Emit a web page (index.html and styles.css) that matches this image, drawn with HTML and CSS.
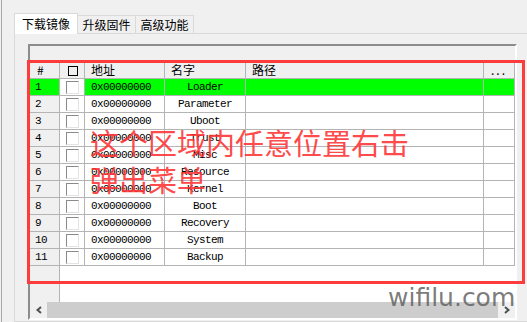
FILE: index.html
```html
<!DOCTYPE html>
<html lang="zh-CN">
<head>
  <meta charset="UTF-8">
  <title>下载镜像</title>
  <link rel="stylesheet" href="styles.css">
</head>
<body>

  <div class="window">
    <div class="tabs">
      <div class="tab active">下载镜像</div>
      <div class="tab">升级固件</div>
      <div class="tab">高级功能</div>
    </div>

    <div class="panel">
      <div class="listbox">
        <div class="band"></div>

        <div class="row head">
          <div class="cell num">#</div>
          <div class="cell chk"><span class="box-glyph"></span></div>
          <div class="cell">地址</div>
          <div class="cell">名字</div>
          <div class="cell">路径</div>
          <div class="cell dots">...</div>
        </div>

        <div class="row selected">
          <div class="cell num">1</div>
          <div class="cell chk"><span class="checkbox"></span></div>
          <div class="cell addr">0x00000000</div>
          <div class="cell name">Loader</div>
          <div class="cell"></div>
          <div class="cell"></div>
        </div>
        <div class="row">
          <div class="cell num">2</div>
          <div class="cell chk"><span class="checkbox"></span></div>
          <div class="cell addr">0x00000000</div>
          <div class="cell name">Parameter</div>
          <div class="cell"></div>
          <div class="cell"></div>
        </div>
        <div class="row">
          <div class="cell num">3</div>
          <div class="cell chk"><span class="checkbox"></span></div>
          <div class="cell addr">0x00000000</div>
          <div class="cell name">Uboot</div>
          <div class="cell"></div>
          <div class="cell"></div>
        </div>
        <div class="row">
          <div class="cell num">4</div>
          <div class="cell chk"><span class="checkbox"></span></div>
          <div class="cell addr">0x00000000</div>
          <div class="cell name">Trust</div>
          <div class="cell"></div>
          <div class="cell"></div>
        </div>
        <div class="row">
          <div class="cell num">5</div>
          <div class="cell chk"><span class="checkbox"></span></div>
          <div class="cell addr">0x00000000</div>
          <div class="cell name">Misc</div>
          <div class="cell"></div>
          <div class="cell"></div>
        </div>
        <div class="row">
          <div class="cell num">6</div>
          <div class="cell chk"><span class="checkbox"></span></div>
          <div class="cell addr">0x00000000</div>
          <div class="cell name">Resource</div>
          <div class="cell"></div>
          <div class="cell"></div>
        </div>
        <div class="row">
          <div class="cell num">7</div>
          <div class="cell chk"><span class="checkbox"></span></div>
          <div class="cell addr">0x00000000</div>
          <div class="cell name">Kernel</div>
          <div class="cell"></div>
          <div class="cell"></div>
        </div>
        <div class="row">
          <div class="cell num">8</div>
          <div class="cell chk"><span class="checkbox"></span></div>
          <div class="cell addr">0x00000000</div>
          <div class="cell name">Boot</div>
          <div class="cell"></div>
          <div class="cell"></div>
        </div>
        <div class="row">
          <div class="cell num">9</div>
          <div class="cell chk"><span class="checkbox"></span></div>
          <div class="cell addr">0x00000000</div>
          <div class="cell name">Recovery</div>
          <div class="cell"></div>
          <div class="cell"></div>
        </div>
        <div class="row">
          <div class="cell num">10</div>
          <div class="cell chk"><span class="checkbox"></span></div>
          <div class="cell addr">0x00000000</div>
          <div class="cell name">System</div>
          <div class="cell"></div>
          <div class="cell"></div>
        </div>
        <div class="row">
          <div class="cell num">11</div>
          <div class="cell chk"><span class="checkbox"></span></div>
          <div class="cell addr">0x00000000</div>
          <div class="cell name">Backup</div>
          <div class="cell"></div>
          <div class="cell"></div>
        </div>

        <div class="filler"></div>

        <div class="hscroll">
          <div class="arrow">
            <svg width="8" height="8" viewBox="0 0 8 8"><path d="M6 1 L2.5 4 L6 7" fill="none" stroke="#505050" stroke-width="2"/></svg>
          </div>
          <div class="thumb"></div>
          <div class="arrow">
            <svg width="8" height="8" viewBox="0 0 8 8"><path d="M2 1 L5.5 4 L2 7" fill="none" stroke="#505050" stroke-width="2"/></svg>
          </div>
        </div>
      </div>
    </div>
  </div>

  <!-- Markierung und Hinweis liegen über der Liste -->
  <div class="mark"></div>
  <div class="note">这个区域内任意位置右击<br>弹出菜单</div>
  <div class="watermark">wifilu.com</div>

</body>
</html>
```

FILE: styles.css
```css
body {
  margin: 0;
  width: 527px;
  height: 322px;
  overflow: hidden;
  background: #f0f0f0;
  font-family: "Noto Sans CJK SC", "Liberation Sans", sans-serif;
  font-size: 12px;
  color: #000;
}
.window {
  margin-left: 1px;
  border-left: 1px solid #a8a8a8;
  height: 322px;
  box-sizing: border-box;
  padding: 13px 0 0 12px;
}
.tabs {
  display: flex;
  align-items: flex-end;
  height: 20px;
  position: relative;
  z-index: 1;
}
.tab {
  box-sizing: border-box;
  width: 58px;
  height: 18px;
  border-top: 1px solid #d9d9d9;
  border-right: 1px solid #d9d9d9;
  background: #f0f0f0;
  text-align: center;
  line-height: 17px;
}
.tab.active {
  width: 64px;
  height: 21px;
  margin-bottom: -1px;
  border-left: 1px solid #d9d9d9;
  background: #fff;
  line-height: 19px;
}
.panel {
  border: 1px solid #d9d9d9;
  border-right: none;
  height: 289px;
  box-sizing: border-box;
  padding: 10px 0 0 13px;
}
.listbox {
  width: 489px;
  height: 276px;
  box-sizing: border-box;
  border-style: solid;
  border-width: 2px;
  border-color: #8c8c8c #fff #fff #8c8c8c;
  display: flex;
  flex-direction: column;
  background: #fff;
}
.band {
  height: 16px;
  background: #f0f0f0;
}
.row {
  display: grid;
  grid-template-columns: 30px 25px 80px 81px 238px 31px;
  height: 17px;
}
.cell {
  box-sizing: border-box;
  border-right: 1px solid #b4b4b4;
  border-bottom: 1px solid #b4b4b4;
  padding-left: 6px;
  line-height: 16px;
  white-space: nowrap;
  overflow: hidden;
}
.num {
  background: #f0f0f0;
  padding-left: 5px;
  font-family: "Liberation Mono", monospace;
  font-size: 11px;
  letter-spacing: -0.6px;
}
.head .cell {
  background: #f0f0f0;
}
.head .num {
  padding-left: 7px;
  font-family: "Noto Sans CJK SC", sans-serif;
  font-size: 12px;
  letter-spacing: 0;
}
.dots {
  text-align: center;
  padding-left: 0;
  letter-spacing: 2px;
}
.chk {
  padding: 2px 0 0 6px;
}
.head .chk {
  padding: 4px 0 0 8px;
}
.box-glyph {
  display: block;
  width: 10px;
  height: 10px;
  box-sizing: border-box;
  border: 1px solid #000;
}
.checkbox {
  display: block;
  width: 13px;
  height: 13px;
  box-sizing: border-box;
  background: #fff;
  border-style: solid;
  border-width: 1px;
  border-color: #8a8a8a #e3e3e3 #e3e3e3 #8a8a8a;
}
.addr, .name {
  font-family: "Liberation Mono", monospace;
  font-size: 11px;
  letter-spacing: -0.6px;
}
.name {
  text-align: center;
  padding-left: 0;
}
.selected .cell {
  background: #00ff00;
}
.selected .chk {
  background: #fff;
}
.filler {
  flex: 1;
  background: linear-gradient(to right, #f0f0f0 0 29px, #b4b4b4 29px 30px, #fff 30px);
}
.hscroll {
  display: flex;
  height: 16px;
  background: #f0f0f0;
}
.arrow {
  width: 17px;
  display: flex;
  align-items: center;
  justify-content: center;
}
.thumb {
  flex: 1;
  background: #cdcdcd;
}
.mark {
  position: absolute;
  left: 27px;
  top: 60px;
  width: 498px;
  height: 224px;
  box-sizing: border-box;
  border: 3px solid #ff3c3c;
}
.note {
  position: absolute;
  left: 90px;
  top: 124px;
  font-size: 29px;
  line-height: 37px;
  color: rgba(255, 50, 50, 0.9);
}
.watermark {
  position: absolute;
  left: 388px;
  top: 283px;
  font-family: "DejaVu Sans", sans-serif;
  font-size: 25px;
  color: rgba(100, 100, 100, 0.85);
}
```
